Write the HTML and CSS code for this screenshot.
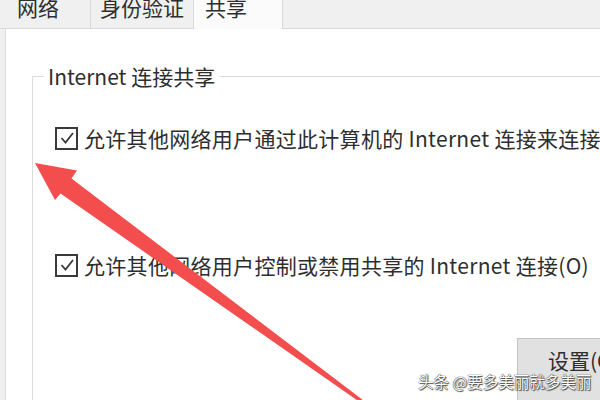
FILE: index.html
```html
<!DOCTYPE html>
<html lang="zh-CN">
  <head>
  <meta charset="utf-8">
  <title>共享</title>
  <link rel="stylesheet" href="styles.css">
  </head>
  <body>
    <div id="dialog">
      <div class="tabs">
        <div class="tab tab-net"><span>网络</span></div>
        <div class="tab tab-auth"><span>身份验证</span></div>
        <div class="tab tab-share selected"><span>共享</span></div>
      </div>

      <div class="panel">
        <fieldset class="group">
          <legend>Internet 连接共享</legend>

          <div class="check-row first">
            <span class="check">
              <svg width="18" height="18" viewBox="0 0 18 18"><path d="M3.5 9 L7.5 13.5 L15 4" fill="none" stroke="#3a3a3a" stroke-width="1.8"/></svg>
            </span>
            <span class="label">允许其他网络用户通过此计算机的 Internet 连接来连接(N)</span>
          </div>

          <div class="check-row second">
            <span class="check">
              <svg width="18" height="18" viewBox="0 0 18 18"><path d="M3.5 9 L7.5 13.5 L15 4" fill="none" stroke="#3a3a3a" stroke-width="1.8"/></svg>
            </span>
            <span class="label">允许其他网络用户控制或禁用共享的 Internet 连接(O)</span>
          </div>

          <div class="buttons">
            <button class="settings">设置(G)...</button>
          </div>
        </fieldset>
      </div>
    </div>

    <!-- red annotation arrow drawn over the dialog -->
    <svg class="arrow" width="600" height="400" viewBox="0 0 600 400">
      <polygon fill="#f34d4d" points="35,163 77,170.5 71.5,178.5 376,410 374,412 60.5,193.5 55,200"/>
    </svg>

    <div class="watermark">头条 @要多美丽就多美丽</div>
  </body>
</html>
```

FILE: styles.css
```css
html, body {
  margin: 0;
  padding: 0;
}

body {
  width: 600px;
  height: 400px;
  overflow: hidden;
  position: relative;
  background: #f0f0f0;
  color: #2e2e2e;
  font-family: "Noto Sans CJK SC", "Microsoft YaHei", sans-serif;
  font-size: 21px;
}

#dialog {
  height: 400px;
  display: flex;
  flex-direction: column;
}

/* tab strip */

.tabs {
  display: flex;
  height: 28px;
  padding-left: 5px;
  background: #f0f0f0;
  border-bottom: 1px solid #d9d9d9;
  flex-shrink: 0;
}

.tab {
  box-sizing: border-box;
  height: 28px;
  border-right: 1px solid #d9d9d9;
  white-space: nowrap;
}

.tab span {
  display: block;
  line-height: 20px;
  margin-top: -3px;
}

.tab-net {
  width: 86px;
  padding-left: 12px;
}

.tab-auth {
  width: 103px;
  padding-left: 9px;
}

.tab-share {
  width: 90px;
  padding-left: 11px;
}

.tab.selected {
  height: 29px;
  background: #fbfbfb;
  border-left: 1px solid #d9d9d9;
  margin-left: -1px;
}

/* page body */

.panel {
  flex: 1;
  margin-left: 5px;
  background: #ffffff;
  border-left: 1px solid #dcdcdc;
  padding: 35px 0 0 26px;
  overflow: hidden;
}

.group {
  margin: 0;
  padding: 0 0 0 11px;
  border: 1px solid #dcdcdc;
  border-right: none;
  border-bottom: none;
  height: 400px;
  min-width: 0;
}

.group legend {
  padding: 0 4px;
  line-height: 24px;
  white-space: nowrap;
}

.check-row {
  display: flex;
  align-items: center;
  height: 26px;
  margin-left: 11px;
  white-space: nowrap;
}

.check-row.first {
  margin-top: 37px;
}

.check-row.second {
  margin-top: 101px;
}

.check {
  box-sizing: border-box;
  width: 23px;
  height: 23px;
  border: 2px solid #3a3a3a;
  display: flex;
  align-items: center;
  justify-content: center;
  flex-shrink: 0;
  margin-right: 6px;
}

.check svg {
  display: block;
}

.label {
  line-height: 26px;
  letter-spacing: 0.3px;
}

.buttons {
  margin-top: 60px;
  padding-left: 473px;
}

.settings {
  box-sizing: border-box;
  width: 140px;
  height: 70px;
  margin: 0;
  padding: 0 0 26px 30px;
  text-align: left;
  display: block;
  background: #e1e1e1;
  border: 1px solid #c4c4c4;
  color: #2e2e2e;
  font-family: inherit;
  font-size: 21px;
  line-height: 24px;
  white-space: nowrap;
}

/* overlays */

.arrow {
  position: absolute;
  left: 0;
  top: 0;
}

.watermark {
  position: absolute;
  left: 418px;
  top: 370px;
  font-size: 15.5px;
  line-height: 22px;
  color: #ffffff;
  white-space: nowrap;
  text-shadow: 0 0 1px #333, 0 0 1px #333, 1px 1px 1px #555;
}
```
